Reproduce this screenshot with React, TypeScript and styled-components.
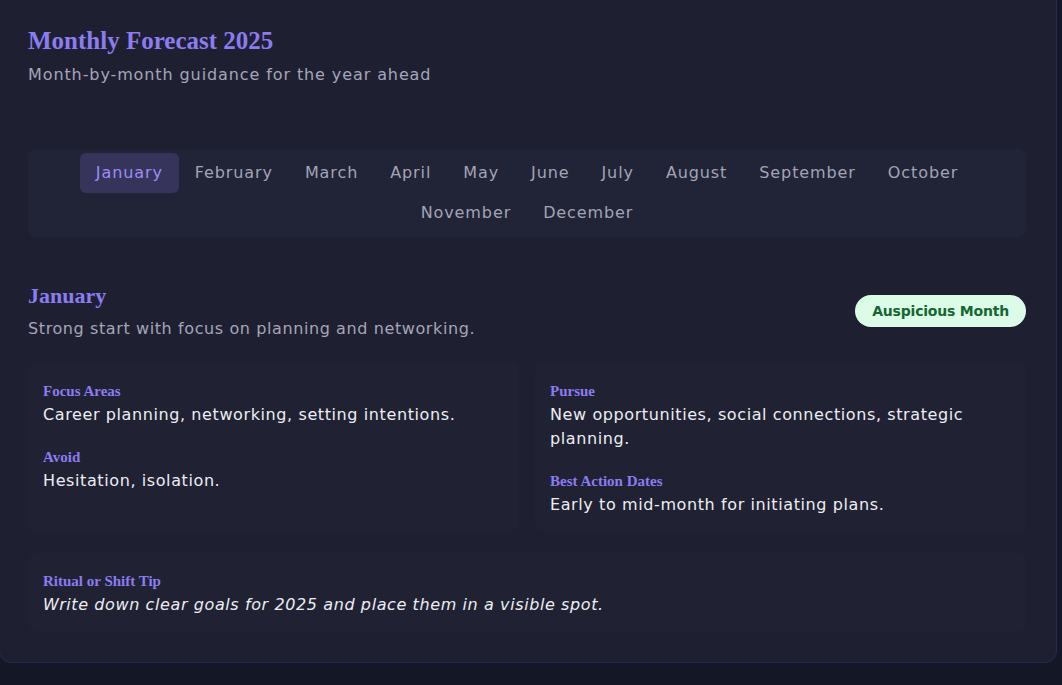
import React from "react";
import styled, { createGlobalStyle } from "styled-components";

const GlobalStyle = createGlobalStyle`
  html, body {
    margin: 0;
    padding: 0;
    background: #131726;
    overflow: hidden;
  }
  body {
    font-family: "DejaVu Sans", "Open Sans", sans-serif;
    -webkit-font-smoothing: antialiased;
  }
  * { box-sizing: border-box; }
`;

const serif = `"Liberation Serif", "DejaVu Serif", serif`;
const sans = `"DejaVu Sans", "Open Sans", sans-serif`;

const Card = styled.section`
  width: 1058px;
  margin: -1px 0 0 -1px;
  background: #1e2032;
  border: 1px solid #2a2850;
  border-radius: 0 0 12px 12px;
  padding: 25px 30px 31px 28px;
  display: flex;
  flex-direction: column;
`;

const Title = styled.h1`
  margin: 0;
  font-family: ${serif};
  font-weight: 700;
  font-size: 25px;
  line-height: 32px;
  color: #8b7cf0;
`;

const Subtitle = styled.p`
  margin: 6px 0 0;
  font-family: ${sans};
  font-size: 16px;
  line-height: 24px;
  letter-spacing: 0.9px;
  color: #a5a5b8;
`;

const TabPanel = styled.nav`
  margin-top: 62px;
  background: #212336;
  border-radius: 8px;
  padding: 4px 8px;
  display: flex;
  flex-wrap: wrap;
  justify-content: center;
`;

const Tab = styled.button<{ $active?: boolean }>`
  border: none;
  background: ${(p) => (p.$active ? "#37345b" : "transparent")};
  color: ${(p) => (p.$active ? "#9d8cf6" : "#a3a3b6")};
  font-family: ${sans};
  font-weight: 400;
  font-size: 16px;
  line-height: 24px;
  letter-spacing: 0.9px;
  padding: 8px 16px;
  border-radius: 6px;
  cursor: pointer;
`;

const MonthHeader = styled.header`
  margin-top: 43px;
  display: flex;
  align-items: center;
  justify-content: space-between;
`;

const MonthTitle = styled.h2`
  margin: 0;
  font-family: ${serif};
  font-weight: 700;
  font-size: 22px;
  line-height: 32px;
  color: #8b7cf0;
`;

const MonthDesc = styled.p`
  margin: 5px 0 0;
  font-family: ${sans};
  font-size: 16px;
  line-height: 24px;
  letter-spacing: 0.6px;
  color: #a5a5b8;
`;

const Badge = styled.span`
  background: #dcfce7;
  color: #166534;
  font-family: ${sans};
  font-weight: 700;
  font-size: 14px;
  line-height: 20px;
  letter-spacing: -0.2px;
  padding: 6px 17px;
  border-radius: 999px;
`;

const Grid = styled.div`
  margin-top: 22px;
  display: grid;
  grid-template-columns: 1fr 1fr;
  gap: 16px;
`;

const Panel = styled.div`
  background: #202234;
  border-radius: 8px;
  padding: 16px 15px 14px;
  display: flex;
  flex-direction: column;
  gap: 18px;
`;

const TipPanel = styled(Panel)`
  margin-top: 22px;
`;

const Label = styled.h3`
  margin: 0;
  font-family: ${serif};
  font-weight: 700;
  font-size: 15px;
  line-height: 24px;
  color: #8b7cf0;
`;

const Text = styled.p<{ $italic?: boolean }>`
  margin: 0;
  font-family: ${sans};
  font-weight: 400;
  font-style: ${(p) => (p.$italic ? "italic" : "normal")};
  font-size: 16px;
  line-height: 24px;
  letter-spacing: 0.6px;
  color: #ededf2;
`;

const months = [
  "January", "February", "March", "April", "May", "June",
  "July", "August", "September", "October", "November", "December",
];

function Block({ label, children, italic }: { label: string; children: React.ReactNode; italic?: boolean }) {
  return (
    <div>
      <Label>{label}</Label>
      <Text $italic={italic}>{children}</Text>
    </div>
  );
}

export default function App() {
  return (
    <>
      <GlobalStyle />
      <Card>
        <Title>Monthly Forecast 2025</Title>
        <Subtitle>Month-by-month guidance for the year ahead</Subtitle>
        <TabPanel>
          {months.map((m, i) => (
            <Tab key={m} $active={i === 0}>{m}</Tab>
          ))}
        </TabPanel>
        <MonthHeader>
          <div>
            <MonthTitle>January</MonthTitle>
            <MonthDesc>Strong start with focus on planning and networking.</MonthDesc>
          </div>
          <Badge>Auspicious Month</Badge>
        </MonthHeader>
        <Grid>
          <Panel>
            <Block label="Focus Areas">Career planning, networking, setting intentions.</Block>
            <Block label="Avoid">Hesitation, isolation.</Block>
          </Panel>
          <Panel>
            <Block label="Pursue">New opportunities, social connections, strategic planning.</Block>
            <Block label="Best Action Dates">Early to mid-month for initiating plans.</Block>
          </Panel>
        </Grid>
        <TipPanel>
          <Block label="Ritual or Shift Tip" italic>
            Write down clear goals for 2025 and place them in a visible spot.
          </Block>
        </TipPanel>
      </Card>
    </>
  );
}
